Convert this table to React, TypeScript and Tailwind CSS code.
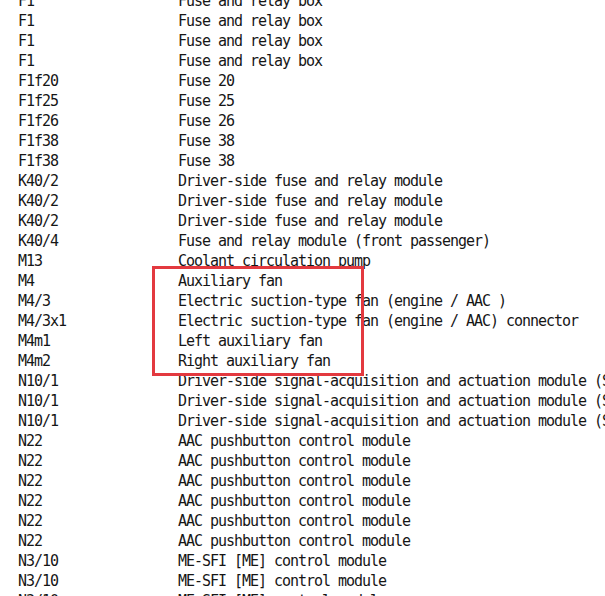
import React from "react";

const rows: [string, string][] = [
  ["F1", "Fuse and relay box"],
  ["F1", "Fuse and relay box"],
  ["F1", "Fuse and relay box"],
  ["F1", "Fuse and relay box"],
  ["F1f20", "Fuse 20"],
  ["F1f25", "Fuse 25"],
  ["F1f26", "Fuse 26"],
  ["F1f38", "Fuse 38"],
  ["F1f38", "Fuse 38"],
  ["K40/2", "Driver-side fuse and relay module"],
  ["K40/2", "Driver-side fuse and relay module"],
  ["K40/2", "Driver-side fuse and relay module"],
  ["K40/4", "Fuse and relay module (front passenger)"],
  ["M13", "Coolant circulation pump"],
  ["M4", "Auxiliary fan"],
  ["M4/3", "Electric suction-type fan (engine / AAC )"],
  ["M4/3x1", "Electric suction-type fan (engine / AAC) connector"],
  ["M4m1", "Left auxiliary fan"],
  ["M4m2", "Right auxiliary fan"],
  ["N10/1", "Driver-side signal-acquisition and actuation module (SAM)"],
  ["N10/1", "Driver-side signal-acquisition and actuation module (SAM)"],
  ["N10/1", "Driver-side signal-acquisition and actuation module (SAM)"],
  ["N22", "AAC pushbutton control module"],
  ["N22", "AAC pushbutton control module"],
  ["N22", "AAC pushbutton control module"],
  ["N22", "AAC pushbutton control module"],
  ["N22", "AAC pushbutton control module"],
  ["N22", "AAC pushbutton control module"],
  ["N3/10", "ME-SFI [ME] control module"],
  ["N3/10", "ME-SFI [ME] control module"],
  ["N3/10", "ME-SFI [ME] control module"],
];

const App = () => {
  return (
    <div className="relative w-[605px] h-[596px] overflow-hidden bg-white">
      <div className="-mt-[9px] pl-[18px] font-['DejaVu_Sans_Mono',monospace] text-[15px] tracking-[-1.03px] text-[#161616] whitespace-nowrap">
        {rows.map(([code, desc], i) => (
          <div key={i} className="flex h-[20px] items-center">
            <span className="w-[160px] shrink-0">{code}</span>
            <span>{desc}</span>
          </div>
        ))}
      </div>
      {/* highlight around the fan entries */}
      <div className="absolute left-[152px] top-[266px] w-[212px] h-[110px] border-[3px] border-[#e3393f]" />
    </div>
  );
};

export default App;
